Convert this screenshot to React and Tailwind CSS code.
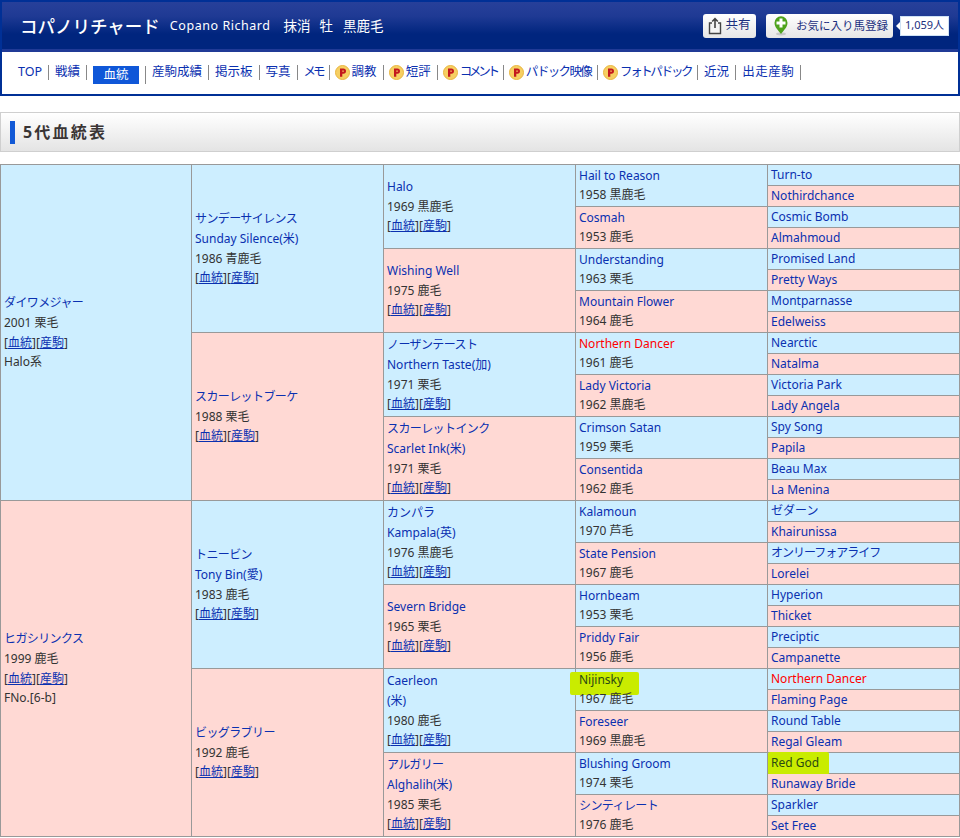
import React from "react";

const g1 = [
  { links: ["ダイワメジャー"], info: "2001 栗毛", ped: true, extra: "Halo系" },
  { links: ["ヒガシリンクス"], info: "1999 鹿毛", ped: true, extra: "FNo.[6-b]" },
];
const g2 = [
  { links: ["サンデーサイレンス", "Sunday Silence(米)"], info: "1986 青鹿毛", ped: true },
  { links: ["スカーレットブーケ"], info: "1988 栗毛", ped: true },
  { links: ["トニービン", "Tony Bin(愛)"], info: "1983 鹿毛", ped: true },
  { links: ["ビッグラブリー"], info: "1992 鹿毛", ped: true },
];
const g3 = [
  { links: ["Halo"], info: "1969 黒鹿毛", ped: true },
  { links: ["Wishing Well"], info: "1975 鹿毛", ped: true },
  { links: ["ノーザンテースト", "Northern Taste(加)"], info: "1971 栗毛", ped: true },
  { links: ["スカーレットインク", "Scarlet Ink(米)"], info: "1971 栗毛", ped: true },
  { links: ["カンパラ", "Kampala(英)"], info: "1976 黒鹿毛", ped: true },
  { links: ["Severn Bridge"], info: "1965 栗毛", ped: true },
  { links: ["Caerleon", "(米)"], info: "1980 鹿毛", ped: true },
  { links: ["アルガリー", "Alghalih(米)"], info: "1985 栗毛", ped: true },
];
const g4 = [
  ["Hail to Reason", "1958 黒鹿毛"], ["Cosmah", "1953 鹿毛"], ["Understanding", "1963 栗毛"], ["Mountain Flower", "1964 鹿毛"],
  ["Northern Dancer", "1961 鹿毛", "red"], ["Lady Victoria", "1962 黒鹿毛"], ["Crimson Satan", "1959 栗毛"], ["Consentida", "1962 鹿毛"],
  ["Kalamoun", "1970 芦毛"], ["State Pension", "1967 鹿毛"], ["Hornbeam", "1953 栗毛"], ["Priddy Fair", "1956 鹿毛"],
  ["Nijinsky", "1967 鹿毛", "mark"], ["Foreseer", "1969 黒鹿毛"], ["Blushing Groom", "1974 栗毛"], ["シンティレート", "1976 鹿毛"],
].map(([n, info, flag]) => ({ links: [n], info, flag }));
const g5 = [
  "Turn-to", "Nothirdchance", "Cosmic Bomb", "Almahmoud", "Promised Land", "Pretty Ways", "Montparnasse", "Edelweiss",
  "Nearctic", "Natalma", "Victoria Park", "Lady Angela", "Spy Song", "Papila", "Beau Max", "La Menina",
  "ゼダーン", "Khairunissa", "オンリーフォアライフ", "Lorelei", "Hyperion", "Thicket", "Preciptic", "Campanette",
  "Northern Dancer", "Flaming Page", "Round Table", "Regal Gleam", "Red God", "Runaway Bride", "Sparkler", "Set Free",
].map((n) => ({
  links: [n],
  flag: n === "Red God" ? "mark5" : n === "Northern Dancer" ? "red" : undefined,
}));

const gens = [
  { span: 16, data: g1 },
  { span: 8, data: g2 },
  { span: 4, data: g3 },
  { span: 2, data: g4 },
  { span: 1, data: g5 },
];

const isKana = (s) => /^[\u30a0-\u30ff]+$/.test(s);

function Cell({ item, span, index }) {
  const bg = index % 2 === 0 ? "bg-[#cdeeff]" : "bg-[#ffd9d4]";
  const linkColor =
    item.flag === "red"
      ? "text-[#ff0000]"
      : item.flag === "mark" || item.flag === "mark5"
        ? "text-[#2b4a12]"
        : "text-[#0a30b0]";
  const lead = span === 1 ? "leading-[20px]" : span === 2 ? "leading-[19px]" : "leading-[19.6px]";
  return (
    <td rowSpan={span} className={`relative border border-[#999999] pl-[3px] pr-0 py-0 align-middle ${bg}`}>
      {item.flag === "mark" && (
        <span className="absolute left-[-6px] top-[3px] h-[23px] w-[69px] rounded-[2px] bg-[#c9ec00]" />
      )}
      {item.flag === "mark5" && (
        <span className="absolute left-0 top-[-1px] h-[23px] w-[61px] rounded-[2px] bg-[#c9ec00]" />
      )}
      <div className={`relative ${span === 2 ? "pb-px" : ""}`}>
        {item.links.map((l) => (
          <div
            key={l}
            className={`${linkColor} ${lead} ${isKana(l) && l.length > 4 ? (span > 1 ? "tracking-[-0.6px]" : "tracking-[-1px]") : ""}`}
          >
            {l}
          </div>
        ))}
        {item.info && <div className={`${lead} text-[#333333]`}>{item.info}</div>}
        {item.ped && (
          <div className={`${lead} text-[#333333]`}>
            [<span className="text-[#0a30b0] underline">血統</span>][<span className="text-[#0a30b0] underline">産駒</span>]
          </div>
        )}
        {item.extra && <div className={`${lead} text-[#333333]`}>{item.extra}</div>}
      </div>
    </td>
  );
}

function Coin() {
  return (
    <svg width="15" height="15" viewBox="0 0 15 15" className="mr-[2px] shrink-0">
      <circle cx="7.5" cy="7.5" r="7" fill="#f6cf62" stroke="#e9b640" />
      <path d="M5 3.500h3.400a2.600 2.600 0 0 1 0 5.200H7.300v3H5z M7.300 5.400v1.400h1a.7.7 0 0 0 0-1.400z" fill="#c3181d" fillRule="evenodd" />
    </svg>
  );
}

const nav = [
  { t: "TOP" }, { t: "戦績" }, { t: "血統", active: true }, { t: "産駒成績" }, { t: "掲示板" }, { t: "写真" },
  { t: "メモ", c: "tracking-[-3px]" },
  { t: "調教", p: true }, { t: "短評", p: true }, { t: "コメント", p: true, c: "tracking-[-3.2px]" },
  { t: "パドック映像", p: true, c: "tracking-[-1.7px]" },
  { t: "フォトパドック", p: true, c: "tracking-[-2.4px]" }, { t: "近況" }, { t: "出走産駒", c: "tracking-[0.5px]" },
];

export default function App() {
  const rows = Array.from({ length: 32 }, (_, r) => r);
  return (
    <div className="w-[960px] bg-white pb-px font-['Noto_Sans','Noto_Sans_CJK_JP',sans-serif] text-[12px]">
      <header className="border-2 border-[#003096]">
        <div className="flex h-[50px] items-center justify-between border-b-[3px] border-[#203a96] bg-[linear-gradient(#27409a_0%,#1f3a94_30%,#00257e_68%,#00257e_100%)] pl-[18px] pr-[9px]">
          <div className="flex items-center text-white">
            <h1 className="mt-[2px] text-[17.5px] font-medium">コパノリチャード</h1>
            <div className="mt-px flex items-center">
              <span className="ml-[10px] text-[12.5px] tracking-[0.55px]">Copano Richard</span>
              <span className="ml-[13px] text-[13.5px]">抹消</span>
              <span className="ml-[9px] text-[13.5px]">牡</span>
              <span className="ml-[10px] text-[13.5px]">黒鹿毛</span>
            </div>
          </div>
          <div className="flex items-center">
            <button className="flex h-[24px] w-[53px] items-center justify-center gap-[2px] rounded-[3px] bg-[linear-gradient(#ffffff,#e6e6e6)] text-[12.5px] text-[#1c2f7e]">
              <svg width="15" height="18" viewBox="0 0 15 18">
                <path d="M4 6H1.500v10.500h11V6H10" fill="#f4f4f4" stroke="#444" strokeWidth="1.4" />
                <path d="M7 11V2M4.200 4.500 7 1.600l2.800 2.900" fill="none" stroke="#444" strokeWidth="1.6" />
              </svg>
              共有
            </button>
            <button className="ml-[10px] flex h-[24px] w-[127px] items-center rounded-[3px] bg-[linear-gradient(#ffffff,#e6e6e6)] pl-[7px] text-[11.5px] text-[#1c2f7e]">
              <svg width="16" height="21" viewBox="0 0 16 21" className="mr-[7px]">
                <ellipse cx="8" cy="19" rx="5" ry="1.400" fill="#c8c8c8" />
                <path d="M8 19C5.500 15.500 1.500 12.500 1.500 7.800a6.500 6.500 0 0 1 13 0C14.500 12.500 10.500 15.500 8 19z" fill="#4ea31c" />
                <path d="M6.500 3.500h3v3h3v3h-3v3h-3v-3h-3v-3h3z" fill="#ffffff" />
              </svg>
              お気に入り馬登録
            </button>
            <div className="relative ml-[7px] flex h-[20px] w-[49px] items-center justify-center border border-[#cfe2f5] bg-white text-[11px] text-[#1c2f7e]">
              <span className="absolute left-[-5px] top-[5px] h-0 w-0 border-y-[4px] border-r-[4px] border-y-transparent border-r-white" />
              1,059人
            </div>
          </div>
        </div>
        <nav className="flex h-[42px] items-center bg-white pb-[2px] pl-[10px] text-[12.5px] text-[#0a30b0]">
          {nav.map((n) => (
            <div
              key={n.t}
              className={`flex items-center border-r border-[#888888] pr-[6px] ${n.p ? "pl-[5px]" : "pl-[6px]"} ${n.active ? "h-[18px] translate-y-[3px]" : "h-[15px]"}`}
            >
              {n.p && <Coin />}
              {n.active ? (
                <span className="flex h-[18px] w-[46px] items-center justify-center bg-[#0f57d8] text-white">{n.t}</span>
              ) : (
                <span className={n.c}>{n.t}</span>
              )}
            </div>
          ))}
        </nav>
      </header>

      <section className="mt-[16px] flex h-[40px] items-center border border-[#cfcfcf] bg-[linear-gradient(#ffffff,#e4e4e4)] pl-[9px]">
        <span className="h-[23px] w-[5px] bg-[#1259d6]" />
        <h2 className="ml-[8px] text-[16px] font-bold tracking-[2.2px] text-[#3a3535]">5代血統表</h2>
      </section>

      <table className="mt-[12px] w-[959px] table-fixed border-collapse">
        <colgroup>
          <col className="w-[191px]" /><col className="w-[192px]" /><col className="w-[192px]" /><col className="w-[192px]" /><col className="w-[192px]" />
        </colgroup>
        <tbody>
          {rows.map((r) => (
            <tr key={r} className="h-[21px]">
              {gens.map((g) =>
                r % g.span === 0 ? (
                  <Cell key={g.span} item={g.data[r / g.span]} span={g.span} index={r / g.span} />
                ) : null
              )}
            </tr>
          ))}
        </tbody>
      </table>
    </div>
  );
}
